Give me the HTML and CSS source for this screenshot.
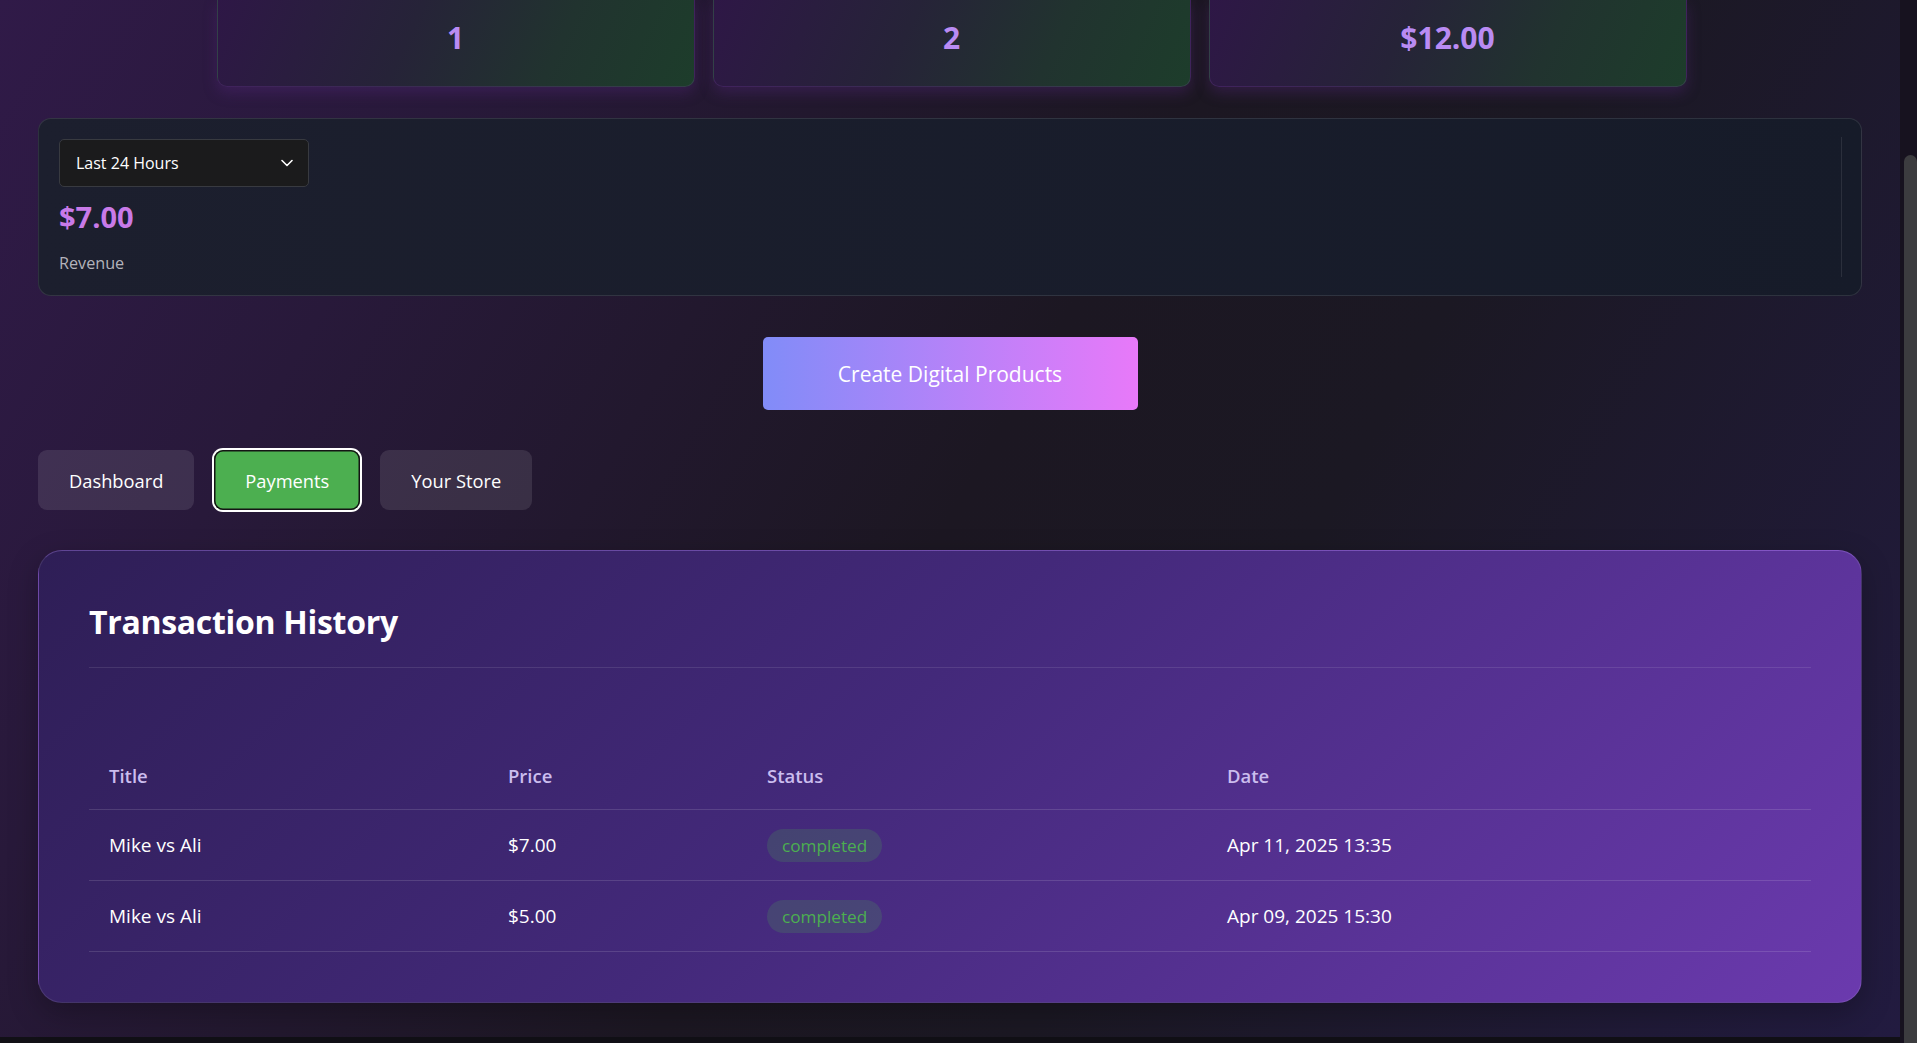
FILE: index.html
```html
<!DOCTYPE html>
<html lang="en">
<head>
<meta charset="utf-8">
<title>Payments</title>
<link rel="stylesheet" href="styles.css">
</head>
<body>
<div class="window">
  <main class="page">
    <div class="stats">
      <div class="stat-card"><span class="stat-value">1</span></div>
      <div class="stat-card"><span class="stat-value">2</span></div>
      <div class="stat-card"><span class="stat-value">$12.00</span></div>
    </div>
    <div class="content">
      <section class="revenue-panel">
        <div class="revenue-body">
          <div class="select">
            <span>Last 24 Hours</span>
            <svg class="chevron" width="12" height="8" viewBox="0 0 12 8"><polyline points="1,1.5 6,6.5 11,1.5" fill="none" stroke="#ffffff" stroke-width="1.6" stroke-linecap="round" stroke-linejoin="round"/></svg>
          </div>
          <div class="revenue-value">$7.00</div>
          <div class="revenue-label">Revenue</div>
        </div>
      </section>

      <div class="cta-row">
        <button class="cta">Create Digital Products</button>
      </div>

      <nav class="tabs">
        <button class="tab">Dashboard</button>
        <button class="tab active">Payments</button>
        <button class="tab">Your Store</button>
      </nav>

      <section class="tx-card">
        <h2 class="tx-title">Transaction History</h2>
        <table class="tx-table">
          <colgroup>
            <col class="col-title">
            <col class="col-price">
            <col class="col-status">
            <col class="col-date">
          </colgroup>
          <thead>
            <tr><th>Title</th><th>Price</th><th>Status</th><th>Date</th></tr>
          </thead>
          <tbody>
            <tr>
              <td>Mike vs Ali</td>
              <td>$7.00</td>
              <td><span class="badge">completed</span></td>
              <td>Apr 11, 2025 13:35</td>
            </tr>
            <tr>
              <td>Mike vs Ali</td>
              <td>$5.00</td>
              <td><span class="badge">completed</span></td>
              <td>Apr 09, 2025 15:30</td>
            </tr>
          </tbody>
        </table>
      </section>
    </div>
  </main>
  <div class="scrollbar"><div class="scroll-thumb"></div></div>
</div>
</body>
</html>
```

FILE: styles.css
```css
html, body {
  margin: 0;
  height: 100%;
}

body {
  background: #111016;
  font-family: "Open Sans", "Noto Sans", sans-serif;
  color: #ffffff;
  overflow: hidden;
}

.window {
  display: flex;
  height: 1043px;
}

.page {
  flex: 1;
  height: 1037px;
  background: linear-gradient(120deg, #301a48 0%, #28193a 20%, #1c1722 50%, #1b1823 65%, #221b40 100%);
  display: flex;
  flex-direction: column;
}

/* stat cards (scrolled, only lower part visible) */
.stats {
  display: grid;
  grid-template-columns: repeat(3, 478px);
  gap: 18px;
  justify-content: center;
  padding-left: 3px;
}

.stat-card {
  box-sizing: border-box;
  height: 87px;
  border-radius: 0 0 10px 10px;
  border: 1px solid rgba(150, 90, 200, 0.18);
  border-top: none;
  background: linear-gradient(115deg, #2e1746 0%, #262338 40%, #21332f 70%, #1d3d2b 100%);
  box-shadow: 0 6px 14px rgba(90, 40, 130, 0.35);
  display: flex;
  align-items: flex-end;
  justify-content: center;
  padding-bottom: 30px;
}

.stat-value {
  font-size: 30px;
  line-height: 36px;
  font-weight: 700;
  color: #b98bf3;
}

.content {
  width: 1824px;
  margin: 31px auto 0;
}

/* revenue panel */
.revenue-panel {
  box-sizing: border-box;
  height: 178px;
  border: 1px solid rgba(255, 255, 255, 0.1);
  border-radius: 13px;
  background: linear-gradient(90deg, #1c1f2e, #161b29);
  padding: 18px 19px 18px 20px;
}

.revenue-body {
  box-sizing: border-box;
  height: 140px;
  padding-top: 2px;
  border-right: 1px solid rgba(255, 255, 255, 0.09);
}

.select {
  box-sizing: border-box;
  width: 250px;
  height: 48px;
  background: #1b1b1c;
  border: 1px solid #383a40;
  border-radius: 5px;
  display: flex;
  align-items: center;
  justify-content: space-between;
  padding: 0 15px 0 16px;
  font-size: 16px;
}

.revenue-value {
  margin-top: 11px;
  font-size: 29px;
  line-height: 37px;
  font-weight: 700;
  color: #c87ae8;
}

.revenue-label {
  margin-top: 15px;
  font-size: 16.2px;
  line-height: 26px;
  color: #b3b3bb;
}

/* call to action */
.cta-row {
  display: flex;
  justify-content: center;
  margin-top: 41px;
}

.cta {
  width: 375px;
  height: 73px;
  border: none;
  border-radius: 5px;
  background: linear-gradient(90deg, #818cf8, #e879f9);
  color: #ffffff;
  font-family: inherit;
  font-size: 21px;
}

/* tabs */
.tabs {
  display: flex;
  gap: 20px;
  margin-top: 40px;
}

.tab {
  height: 60px;
  padding: 0 31px;
  border: none;
  border-radius: 9px;
  background: rgba(255, 255, 255, 0.1);
  color: #ffffff;
  font-family: inherit;
  font-size: 18.3px;
}

.tab.active {
  background: #4caf50;
  box-shadow: inset 0 0 0 1.5px #141414, 0 0 0 2px #ffffff;
}

/* transaction card */
.tx-card {
  box-sizing: border-box;
  margin-top: 40px;
  height: 453px;
  border: 1px solid rgba(255, 255, 255, 0.1);
  border-top-color: rgba(190, 150, 255, 0.3);
  border-radius: 24px;
  padding: 50px;
  background: linear-gradient(135deg, #2e1e56 0%, #43297a 45%, #6b3aae 100%);
  box-shadow: 0 10px 30px rgba(0, 0, 0, 0.25);
}

.tx-title {
  margin: 0;
  font-size: 32px;
  letter-spacing: -0.3px;
  line-height: 42px;
  font-weight: 700;
  padding-bottom: 24px;
  border-bottom: 1px solid rgba(255, 255, 255, 0.1);
}

.tx-table {
  margin-top: 74px;
  width: 100%;
  border-collapse: collapse;
  table-layout: fixed;
}

.col-title { width: 399px; }
.col-price { width: 259px; }
.col-status { width: 460px; }

.tx-table th {
  text-align: left;
  padding: 20px;
  line-height: 27px;
  font-size: 18.5px;
  font-weight: 600;
  color: #cbbdee;
  border-bottom: 1px solid rgba(255, 255, 255, 0.13);
}

.tx-table td {
  padding: 19px 20px 18px;
  line-height: 33px;
  font-size: 19px;
  border-bottom: 1px solid rgba(255, 255, 255, 0.13);
}

.badge {
  display: inline-block;
  vertical-align: top;
  padding: 0 15px;
  line-height: 33px;
  border-radius: 999px;
  background: rgba(76, 175, 80, 0.2);
  color: #4caf50;
  font-size: 17.2px;
}

/* fake window scrollbar */
.scrollbar {
  box-sizing: border-box;
  width: 17px;
  height: 1043px;
  background: #17121f;
  padding-top: 155px;
  display: flex;
  flex-direction: column;
}

.scroll-thumb {
  flex: 1;
  margin-left: 4px;
  background: #3c3c3f;
  border-radius: 7px 7px 0 0;
}
```
